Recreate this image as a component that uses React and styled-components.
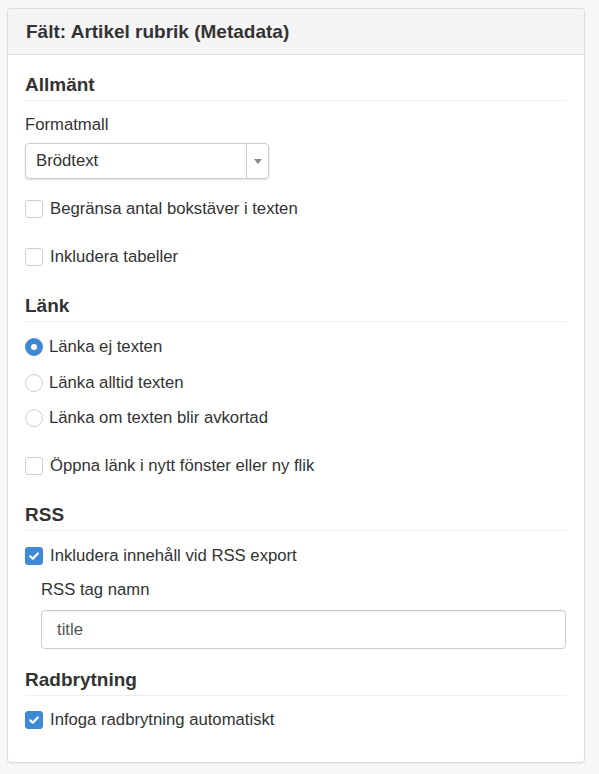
import React from 'react'
import styled, { createGlobalStyle } from 'styled-components'

const GlobalStyle = createGlobalStyle`
   html, body {
      margin: 0;
      padding: 0;
      background: #f7f7f7;
   }
   body {
      font-family: 'Liberation Sans', Arial, sans-serif;
      color: #333;
   }
`

const Checkbox = ({ checked }) => (
   <Box checked={checked}>
      {checked && (
         <svg width="12" height="12" viewBox="0 0 12 12">
            <path
               d="M2.2 6.3 L4.8 8.8 L9.8 3.4"
               fill="none"
               stroke="#fff"
               strokeWidth="2.2"
               strokeLinecap="round"
               strokeLinejoin="round"
            />
         </svg>
      )}
   </Box>
)

const CheckRow = ({ checked, children, top }) => (
   <Row top={top}>
      <Checkbox checked={checked} />
      <RowText>{children}</RowText>
   </Row>
)

const RadioRow = ({ checked, children, top }) => (
   <Row top={top} tight>
      <Radio checked={checked} />
      <RowText>{children}</RowText>
   </Row>
)

export default function App() {
   return (
      <>
         <GlobalStyle />
         <Panel>
            <PanelHeader>
               <PanelTitle>Fält: Artikel rubrik (Metadata)</PanelTitle>
            </PanelHeader>
            <PanelBody>
               <SectionTitle top={20}>Allmänt</SectionTitle>
               <FieldLabel top={14}>Formatmall</FieldLabel>
               <Select>
                  <SelectValue>Brödtext</SelectValue>
                  <SelectArrow>
                     <Caret />
                  </SelectArrow>
               </Select>
               <CheckRow top={20}>Begränsa antal bokstäver i texten</CheckRow>
               <CheckRow top={28}>Inkludera tabeller</CheckRow>

               <SectionTitle top={29}>Länk</SectionTitle>
               <RadioRow checked top={15}>
                  Länka ej texten
               </RadioRow>
               <RadioRow top={16}>Länka alltid texten</RadioRow>
               <RadioRow top={15}>Länka om texten blir avkortad</RadioRow>
               <CheckRow top={28}>Öppna länk i nytt fönster eller ny flik</CheckRow>

               <SectionTitle top={29}>RSS</SectionTitle>
               <CheckRow checked top={15}>
                  Inkludera innehåll vid RSS export
               </CheckRow>
               <Indented>
                  <FieldLabel top={14}>RSS tag namn</FieldLabel>
                  <TextInput defaultValue="title" />
               </Indented>

               <SectionTitle top={21}>Radbrytning</SectionTitle>
               <CheckRow checked top={14}>
                  Infoga radbrytning automatiskt
               </CheckRow>
            </PanelBody>
         </Panel>
      </>
   )
}

const Panel = styled.div`
   margin: 8px 14px 11px 7px;
   background: #fff;
   border: 1px solid #dcdcdc;
   border-radius: 4px;
   box-shadow: 0 1px 2px rgba(0, 0, 0, 0.06);
   overflow: hidden;
`

const PanelHeader = styled.div`
   height: 45px;
   display: flex;
   align-items: center;
   padding: 0 18px;
   background: #f5f5f5;
   border-bottom: 1px solid #dcdcdc;
`

const PanelTitle = styled.h3`
   margin: 0;
   font-size: 19px;
   font-weight: bold;
   color: #333;
`

const PanelBody = styled.div`
   display: flex;
   flex-direction: column;
   align-items: flex-start;
   padding: 0 18px 32px 17px;
`

const SectionTitle = styled.h4`
   align-self: stretch;
   margin: ${({ top }) => top}px 0 0;
   padding-bottom: 5px;
   border-bottom: 1px solid #eee;
   font-size: 19px;
   line-height: 20px;
   font-weight: bold;
   color: #333;
`

const FieldLabel = styled.label`
   display: block;
   margin-top: ${({ top }) => top}px;
   font-size: 16.7px;
   line-height: 20px;
   color: #333;
`

const Select = styled.div`
   margin-top: 8px;
   width: 244px;
   height: 36px;
   box-sizing: border-box;
   display: flex;
   align-items: stretch;
   border: 1px solid #ccc;
   border-radius: 4px;
   box-shadow: 0 1px 2px rgba(0, 0, 0, 0.12);
   background: #fff;
`

const SelectValue = styled.div`
   flex: 1;
   display: flex;
   align-items: center;
   padding-left: 10px;
   font-size: 16.7px;
   color: #333;
   border-right: 1px solid #ccc;
`

const SelectArrow = styled.div`
   width: 21px;
   display: flex;
   align-items: center;
   justify-content: center;
`

const Caret = styled.span`
   width: 0;
   height: 0;
   border-left: 4px solid transparent;
   border-right: 4px solid transparent;
   border-top: 5px solid #888;
`

const Row = styled.div`
   display: flex;
   align-items: center;
   gap: ${({ tight }) => (tight ? 6 : 7)}px;
   margin-top: ${({ top }) => top}px;
   height: 20px;
`

const RowText = styled.span`
   font-size: 16.7px;
   line-height: 20px;
   color: #333;
`

const Box = styled.span`
   width: 18px;
   height: 18px;
   box-sizing: border-box;
   border-radius: 3px;
   display: flex;
   align-items: center;
   justify-content: center;
   border: 1px solid ${({ checked }) => (checked ? '#3a84d0' : '#cfcfcf')};
   background: ${({ checked }) => (checked ? '#3f8ad6' : '#fff')};
`

const Radio = styled.span`
   width: 18px;
   height: 18px;
   box-sizing: border-box;
   border-radius: 50%;
   border: ${({ checked }) => (checked ? '6px solid #3d87d4' : '1px solid #cfcfcf')};
   background: #fff;
`

const Indented = styled.div`
   align-self: stretch;
   padding-left: 16px;
`

const TextInput = styled.input`
   display: block;
   margin-top: 10px;
   width: 100%;
   height: 39px;
   box-sizing: border-box;
   padding: 0 15px;
   border: 1px solid #ccc;
   border-radius: 4px;
   box-shadow: inset 0 1px 1px rgba(0, 0, 0, 0.06);
   font-family: 'Liberation Sans', Arial, sans-serif;
   font-size: 16.7px;
   color: #555;
   outline: none;
`
